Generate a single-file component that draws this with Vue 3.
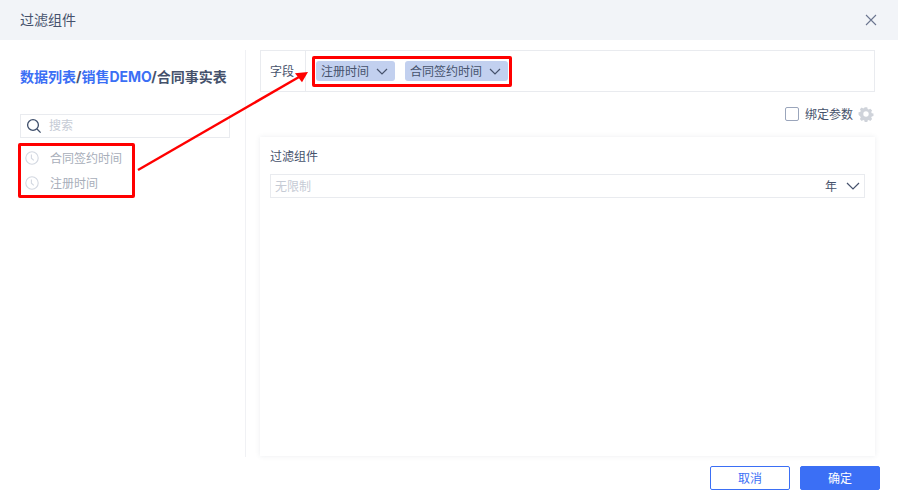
<script setup>
const fields = ['合同签约时间', '注册时间']
const chips = ['注册时间', '合同签约时间']
</script>

<template>
  <div class="dialog">
    <header class="head">
      <span class="head-title">过滤组件</span>
      <svg class="close" width="12" height="12" viewBox="0 0 12 12"><path d="M1 1l10 10M11 1L1 11" stroke="#6b7590" stroke-width="1.1" fill="none" /></svg>
    </header>
    <div class="body">
      <aside class="side">
        <div class="crumb"><span class="blue">数据列表</span>/<span class="blue">销售DEMO</span>/合同事实表</div>
        <div class="search">
          <svg width="16" height="16" viewBox="0 0 16 16"><circle cx="7" cy="7" r="5.4" stroke="#3f4f6b" stroke-width="1.3" fill="none" /><path d="M11 11l3.6 3.6" stroke="#3f4f6b" stroke-width="1.3" fill="none" /></svg>
          <span class="search-text">搜索</span>
        </div>
        <ul class="list">
          <li v-for="f in fields" :key="f">
            <svg width="14" height="14" viewBox="0 0 14 14"><circle cx="7" cy="7" r="6.2" stroke="#d3d8e1" stroke-width="1.1" fill="none" /><path d="M6.4 3.6v3.6l2.4 2.2" stroke="#d3d8e1" stroke-width="1.1" fill="none" /></svg>
            <span>{{ f }}</span>
          </li>
        </ul>
      </aside>
      <main class="main">
        <div class="field-row">
          <div class="field-label"><span class="up">字段</span></div>
          <div class="chips">
            <span v-for="c in chips" :key="c" class="chip">
              <span class="up">{{ c }}</span>
              <svg width="12" height="7" viewBox="0 0 12 7"><path d="M1 1l5 5 5-5" stroke="#46526c" stroke-width="1.2" fill="none" /></svg>
            </span>
          </div>
        </div>
        <div class="bind">
          <span class="check"></span>
          <span class="bind-text up">绑定参数</span>
          <svg class="gear" width="16" height="16" viewBox="0 0 16 16"><path d="M6.6 1h2.8l.4 1.900 1.300.6 1.700-1 2 2-1 1.700.6 1.300 1.900.4v2.800l-1.900.4-.6 1.300 1 1.700-2 2-1.700-1-1.300.6-.4 1.900H6.600l-.4-1.900-1.300-.6-1.700 1-2-2 1-1.700-.6-1.300L-.3 9.400V6.600l1.900-.4.6-1.300-1-1.700 2-2 1.700 1 1.300-.6z" transform="translate(.8 .4) scale(.9)" fill="#cfd3da" /><circle cx="8" cy="8" r="2.700" fill="#fff" /></svg>
        </div>
        <section class="card">
          <div class="card-title">过滤组件</div>
          <div class="range">
            <span class="placeholder up">无限制</span>
            <span class="unit up">年</span>
            <svg width="14" height="8" viewBox="0 0 14 8"><path d="M1 1l6 6 6-6" stroke="#46526c" stroke-width="1.2" fill="none" /></svg>
          </div>
        </section>
      </main>
    </div>
    <footer class="foot">
      <button class="btn ghost">取消</button>
      <button class="btn primary">确定</button>
    </footer>

    <div class="mark mark-left"></div>
    <div class="mark mark-right"></div>
    <svg class="arrow" width="898" height="498" viewBox="0 0 898 498">
      <path d="M138 170L299 77" stroke="#f00" stroke-width="2.4" fill="none" />
      <path d="M308 72l-13 1.300 7 9z" fill="#f00" />
    </svg>
  </div>
</template>

<style>
html, body { margin: 0; background: #fff; }
</style>

<style scoped>
.dialog {
  position: relative;
  width: 898px;
  height: 498px;
  overflow: hidden;
  background: #fff;
  color: #46526c;
  font-family: "Inter", "Noto Sans CJK SC", sans-serif;
  font-size: 12px;
}
.up { padding-bottom: 2px; }
.head {
  height: 40px;
  padding: 0 21px 0 20px;
  display: flex;
  align-items: center;
  justify-content: space-between;
  background: #f2f4f8;
}
.head-title { font-size: 14px; color: #46526c; padding-bottom: 2px; }
.body {
  display: flex;
  height: 407px;
  padding-top: 10px;
}
.side {
  flex: none;
  box-sizing: border-box;
  padding: 0 15px 0 20px;
  border-right: 1px solid #f0f1f4;
  width: 246px;
}
.crumb {
  margin-top: 17px;
  line-height: 20px;
  font-size: 14px;
  font-weight: 700;
  white-space: nowrap;
}
.blue { color: #3b6ff5; }
.search {
  margin-top: 27px;
  height: 24px;
  box-sizing: border-box;
  border: 1px solid #e9ebef;
  display: flex;
  align-items: center;
  padding-left: 5px;
  gap: 7px;
  color: #c6cbd5;
}
.search-text { padding-bottom: 4px; }
.list {
  list-style: none;
  margin: 7px 0 0;
  padding: 0;
}
.list li {
  height: 25px;
  display: flex;
  align-items: center;
  gap: 11px;
  padding-left: 5px;
  color: #a8aeba;
}
.main {
  flex: 1;
  padding: 0 23px 0 14px;
  min-width: 0;
}
.field-row {
  height: 42px;
  box-sizing: border-box;
  display: flex;
  border: 1px solid #e9ebef;
}
.field-label {
  width: 45px;
  box-sizing: border-box;
  display: flex;
  align-items: center;
  justify-content: center;
  padding-right: 2px;
  border-right: 1px solid #e9ebef;
  color: #46526c;
}
.chips {
  display: flex;
  align-items: center;
  gap: 10px;
  padding-left: 10px;
}
.chip {
  height: 20px;
  display: flex;
  align-items: center;
  gap: 7px;
  padding: 0 7px 0 5px;
  background: #c2d0ef;
  border-radius: 3px;
  color: #46526c;
}
.bind {
  height: 44px;
  margin-bottom: 1px;
  display: flex;
  align-items: center;
  justify-content: flex-end;
}
.gear { margin-right: 1px; }
.check {
  width: 12px;
  height: 12px;
  border: 1px solid #9aa5bb;
  border-radius: 2px;
  margin-right: 6px;
}
.bind-text { margin-right: 5px; color: #46526c; }
.card {
  height: 319px;
  box-sizing: border-box;
  padding: 11px 10px 10px;
  box-shadow: 0 0 5px rgba(70, 82, 108, 0.1);
}
.card-title { line-height: 18px; color: #46526c; }
.range {
  margin-top: 8px;
  height: 24px;
  box-sizing: border-box;
  border: 1px solid #e9ebef;
  display: flex;
  align-items: center;
  padding: 0 4px;
}
.placeholder { flex: 1; color: #c6cbd5; }
.unit { margin-right: 9px; }
.foot {
  display: flex;
  justify-content: flex-end;
  gap: 10px;
  padding: 9px 18px 0 0;
}
.btn {
  width: 80px;
  height: 24px;
  box-sizing: border-box;
  border-radius: 2px;
  border: 1px solid #3b6ff5;
  font: inherit;
  padding: 0 0 2px;
}
.ghost { background: #fff; color: #3b6ff5; }
.primary { background: #3b6ff5; color: #fff; }
.mark {
  position: absolute;
  box-sizing: border-box;
  border: 3px solid #f00;
  border-radius: 2px;
}
.mark-left { left: 18px; top: 143px; width: 117px; height: 55px; }
.mark-right { left: 312px; top: 56px; width: 200px; height: 31px; }
.arrow { position: absolute; left: 0; top: 0; pointer-events: none; }
</style>
